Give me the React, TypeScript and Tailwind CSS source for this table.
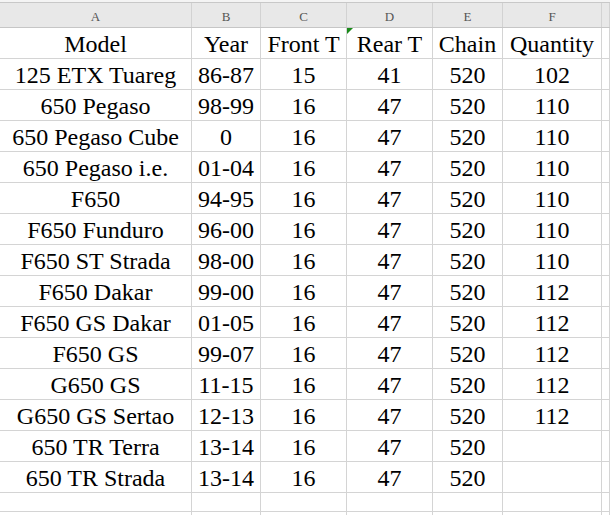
import React from "react";

const cols = ["A", "B", "C", "D", "E", "F", ""];
const widths = ["w-[192px]", "w-[69px]", "w-[86px]", "w-[86px]", "w-[70px]", "w-[99px]", "w-[8px]"];

const rows: string[][] = [
  ["Model", "Year", "Front T", "Rear T", "Chain", "Quantity"],
  ["125 ETX Tuareg", "86-87", "15", "41", "520", "102"],
  ["650 Pegaso", "98-99", "16", "47", "520", "110"],
  ["650 Pegaso Cube", "0", "16", "47", "520", "110"],
  ["650 Pegaso i.e.", "01-04", "16", "47", "520", "110"],
  ["F650", "94-95", "16", "47", "520", "110"],
  ["F650 Funduro", "96-00", "16", "47", "520", "110"],
  ["F650 ST Strada", "98-00", "16", "47", "520", "110"],
  ["F650 Dakar", "99-00", "16", "47", "520", "112"],
  ["F650 GS Dakar", "01-05", "16", "47", "520", "112"],
  ["F650 GS", "99-07", "16", "47", "520", "112"],
  ["G650 GS", "11-15", "16", "47", "520", "112"],
  ["G650 GS Sertao", "12-13", "16", "47", "520", "112"],
  ["650 TR Terra", "13-14", "16", "47", "520", ""],
  ["650 TR Strada", "13-14", "16", "47", "520", ""],
];

export default function App() {
  return (
    <div className="w-[610px] h-[515px] overflow-hidden bg-white font-['Liberation_Serif','Times_New_Roman',serif]">
      <div className="h-[2px] bg-[#f4f4f4]" />
      <div className="h-[1px] bg-[#c8c8c8]" />
      <div className="flex h-[25px] bg-[#e8e8e8] border-b border-[#c6c6c6]">
        {cols.map((c, i) => (
          <div
            key={i}
            className={`${widths[i]} shrink-0 border-r border-[#d2d2d2] flex items-center justify-center text-[13px] text-[#555] pt-[4px]`}
          >
            {c}
          </div>
        ))}
      </div>
      {rows.map((r, ri) => (
        <div key={ri} className="flex h-[31px] border-b border-[#d4d4d4]">
          {cols.map((_, ci) => (
            <div
              key={ci}
              className={`${widths[ci]} shrink-0 border-r border-[#d4d4d4] flex items-center justify-center text-[24px] leading-none text-black pt-[2px] relative whitespace-nowrap`}
            >
              {ri === 0 && ci === 3 && (
                <span className="absolute left-0 top-0 w-0 h-0 border-t-[6px] border-r-[6px] border-t-[#1a8a1a] border-r-transparent" />
              )}
              {r[ci] ?? ""}
            </div>
          ))}
        </div>
      ))}
      <div className="flex h-[19px] border-b border-[#d4d4d4]">
        {cols.map((_, ci) => (
          <div key={ci} className={`${widths[ci]} shrink-0 border-r border-[#d4d4d4]`} />
        ))}
      </div>
      <div className="flex h-[31px] border-b border-[#d4d4d4]">
        {cols.map((_, ci) => (
          <div key={ci} className={`${widths[ci]} shrink-0 border-r border-[#d4d4d4]`} />
        ))}
      </div>
    </div>
  );
}
